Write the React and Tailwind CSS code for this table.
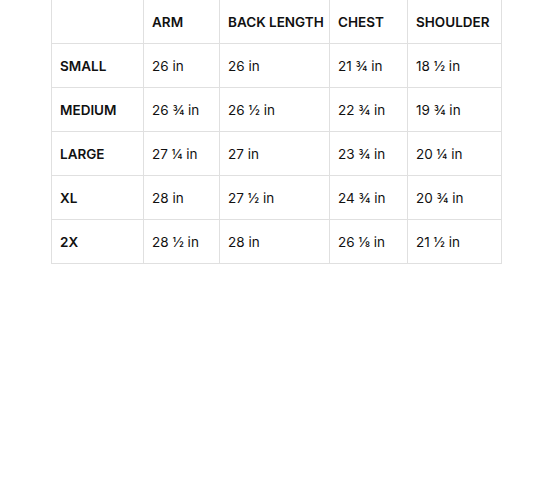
import React from "react";

const headers = ["", "ARM", "BACK LENGTH", "CHEST", "SHOULDER"];
const rows = [
  ["SMALL", "26 in", "26 in", "21 ¾ in", "18 ½ in"],
  ["MEDIUM", "26 ¾ in", "26 ½ in", "22 ¾ in", "19 ¾ in"],
  ["LARGE", "27 ¼ in", "27 in", "23 ¾ in", "20 ¼ in"],
  ["XL", "28 in", "27 ½ in", "24 ¾ in", "20 ¾ in"],
  ["2X", "28 ½ in", "28 in", "26 ⅛ in", "21 ½ in"],
];
const widths = ["w-[92px]", "w-[76px]", "w-[110px]", "w-[78px]", "w-[94px]"];

export default function App() {
  return (
    <div className="w-[556px] h-[503px] bg-white pl-[51px] text-[13.5px] text-[#111]" style={{ fontFamily: "Inter, 'Open Sans', sans-serif" }}>
      <table className="border-collapse table-fixed -mt-px">
        <thead>
          <tr>
            {headers.map((h, i) => (
              <th key={i} className={`${widths[i]} h-[44px] border border-[#e0e0e0] pl-2 pr-1 pt-[2px] text-left font-semibold align-middle whitespace-nowrap`}>
                {h}
              </th>
            ))}
          </tr>
        </thead>
        <tbody>
          {rows.map((r, ri) => (
            <tr key={ri}>
              {r.map((c, ci) => (
                <td key={ci} className={`${widths[ci]} h-[44px] border border-[#e0e0e0] pl-2 pr-1 pt-[2px] align-middle whitespace-nowrap ${ci === 0 ? "font-semibold" : "font-normal"}`}>
                  {c}
                </td>
              ))}
            </tr>
          ))}
        </tbody>
      </table>
    </div>
  );
}
